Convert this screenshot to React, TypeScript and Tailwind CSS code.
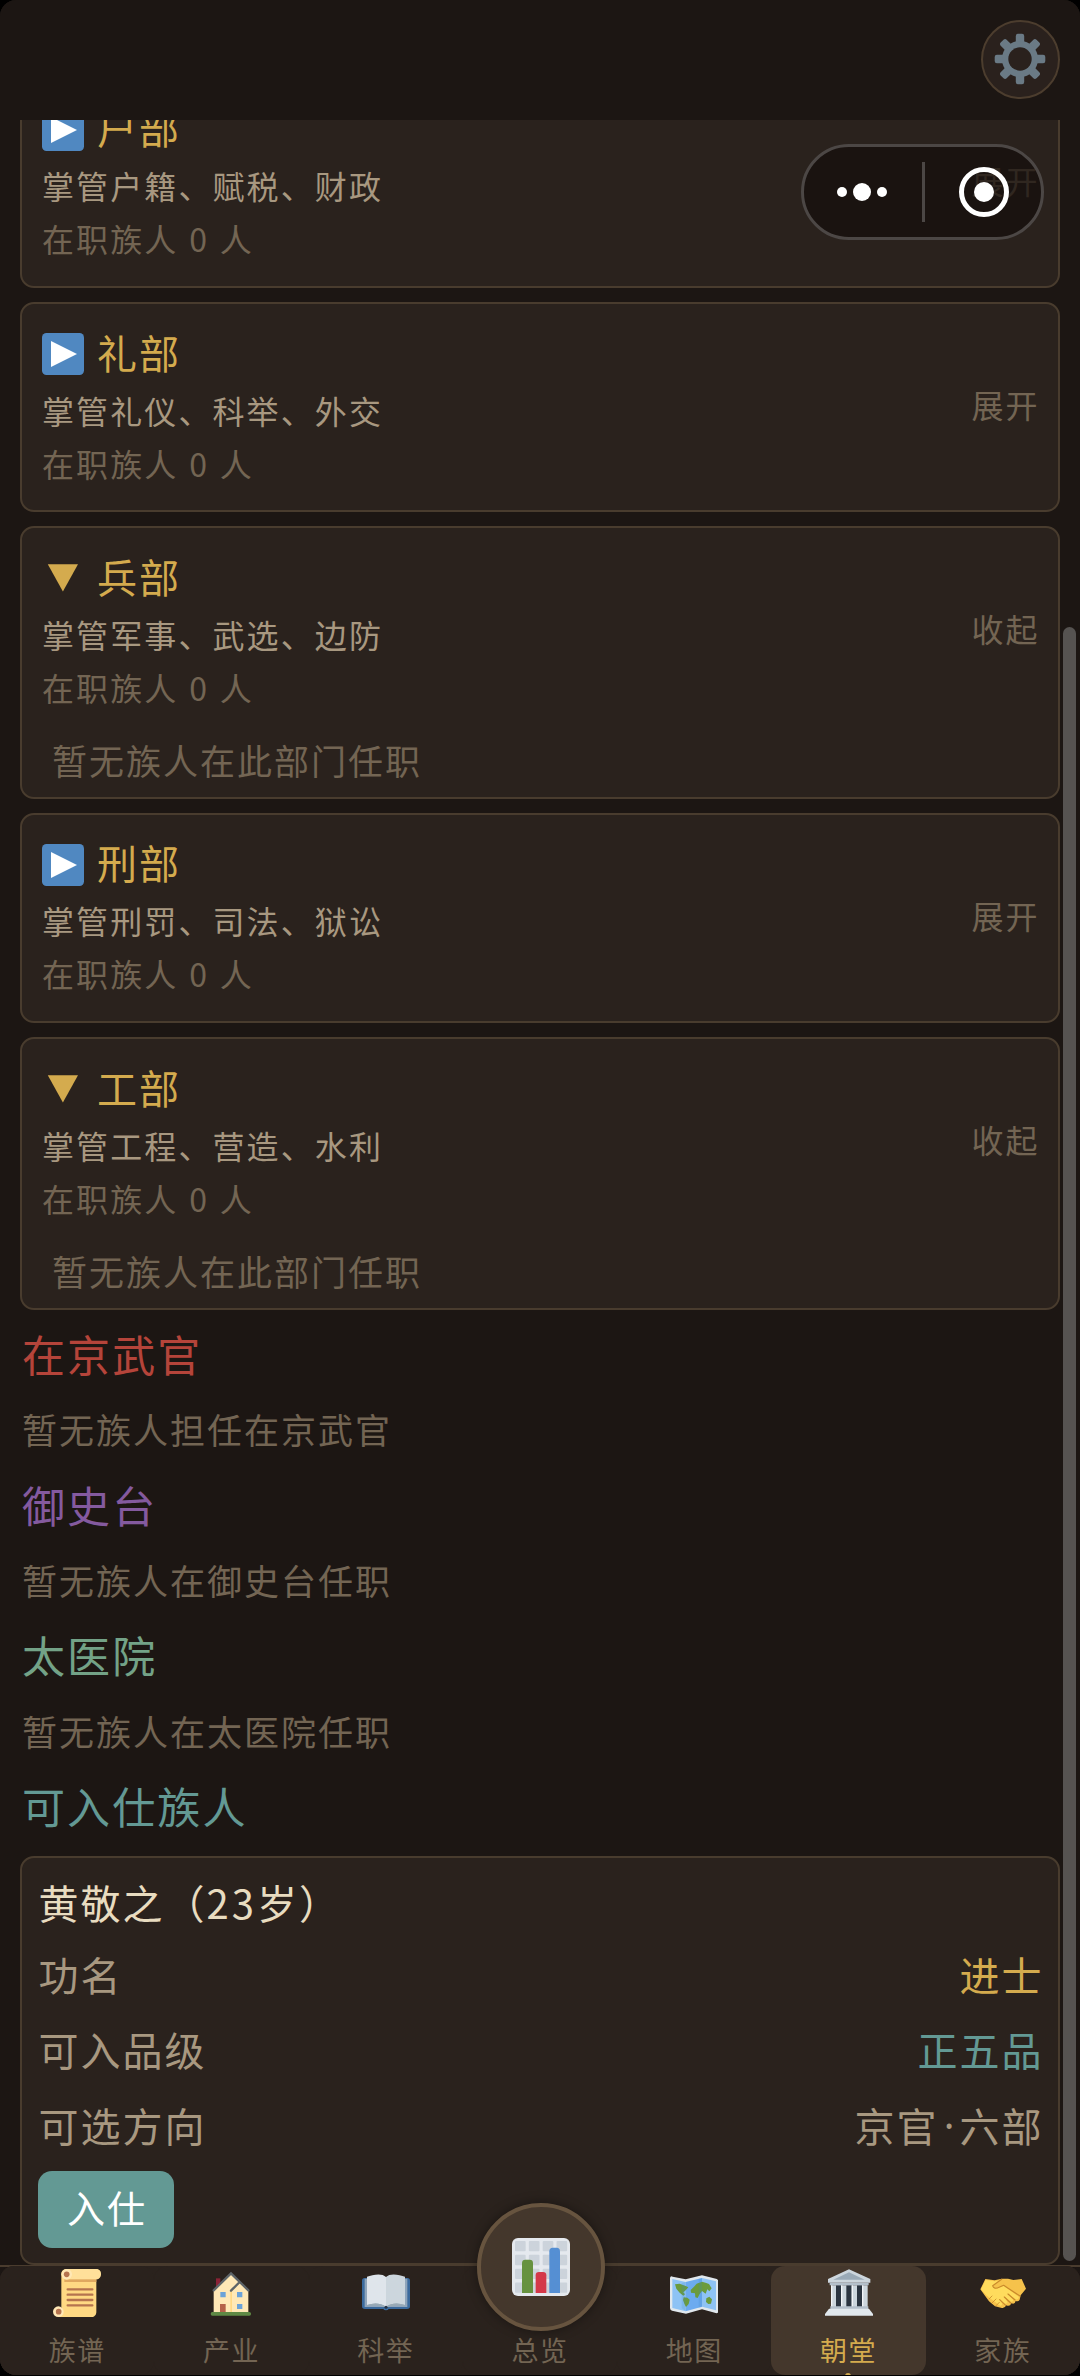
import type { ReactNode } from 'react'

type Department = {
  name: string
  duty: string
  open: boolean
}

const departments: Department[] = [
  { name: '户部', duty: '掌管户籍、赋税、财政', open: false },
  { name: '礼部', duty: '掌管礼仪、科举、外交', open: false },
  { name: '兵部', duty: '掌管军事、武选、边防', open: true },
  { name: '刑部', duty: '掌管刑罚、司法、狱讼', open: false },
  { name: '工部', duty: '掌管工程、营造、水利', open: true },
]

const offices = [
  { title: '在京武官', color: 'text-[#b5443a]', empty: '暂无族人担任在京武官' },
  { title: '御史台', color: 'text-[#845a9f]', empty: '暂无族人在御史台任职' },
  { title: '太医院', color: 'text-[#73a287]', empty: '暂无族人在太医院任职' },
]

const candidateRows = [
  { label: '功名', value: '进士', color: 'text-[#d4ab4e]' },
  { label: '可入品级', value: '正五品', color: 'text-[#639994]' },
]

function PlayIcon() {
  return (
    <svg width="42" height="42" viewBox="0 0 42 42">
      <rect width="42" height="42" rx="4.5" fill="#5088c1" />
      <path d="M9 8L35 21L9 34Z" fill="#fff" />
    </svg>
  )
}

function DownIcon() {
  return (
    <svg width="42" height="42" viewBox="0 0 42 42">
      <path d="M5.8 7.3H36L20.9 34.5Z" fill="#d4ab4e" />
    </svg>
  )
}

function GearIcon() {
  return (
    <svg width="52" height="52" viewBox="-26 -26 52 52">
      {[0, 45, 90, 135].map(angle => (
        <rect key={angle} x="-4.2" y="-25.3" width="8.4" height="50.6" rx="2.2" fill="#6a7a85" transform={`rotate(${angle})`} />
      ))}
      <circle r="18" fill="#6a7a85" />
      <circle r="11.7" fill="#2a211d" />
    </svg>
  )
}

function ScrollIcon() {
  return (
    <svg width="48" height="48" viewBox="158 233 144 144">
      <path fill="#ffd983" d="M183 248C183 239 190 233 199 233H288C297 233 302 240 302 248C302 257 296 264 288 264V362C288 371 282 377 274 377H172L183 350Z" />
      <path fill="#e0a85f" d="M192 264H288V272H192Z" />
      <path fill="#ffe8b6" d="M199 233H288C297 233 302 240 302 248S297 264 288 264H199Z" opacity="0.45" />
      <circle cx="199" cy="249" r="16" fill="#ffe8b6" />
      <circle cx="199" cy="249" r="8.5" fill="#b5744f" />
      <circle cx="174" cy="361" r="16" fill="#ffe8b6" />
      <circle cx="175" cy="361" r="8.5" fill="#b5744f" />
      <path stroke="#b5744f" strokeWidth="7" strokeLinecap="round" d="M202 294H276M202 310H276M202 326H276M202 342H276" />
    </svg>
  )
}

function HouseIcon() {
  return (
    <svg width="48" height="48" viewBox="621 233 144 144">
      <path fill="#8b2236" d="M648 261H661V292H648Z" />
      <path fill="#ffe8b6" d="M641 296L693 246L745 296V366H641Z" />
      <path fill="#ffd983" d="M691 298H696V366H691Z" />
      <path fill="none" stroke="#5d6468" strokeWidth="7" strokeLinecap="round" d="M641 297L693 246L745 297M693 298L716 275" />
      <path fill="#6ca3d8" d="M661 302H677V318H661ZM711 302H727V318H711ZM711 338H727V353H711Z" />
      <path fill="#b5624a" d="M660 338H677V364H660Z" />
      <rect x="632" y="362" width="121" height="11" rx="5" fill="#5f8a45" />
    </svg>
  )
}

function BookIcon() {
  return (
    <svg width="48" height="48" viewBox="1086 233 144 144">
      <path fill="#3b6a9d" d="M1086 268Q1086 260 1094 260H1222Q1230 260 1230 268V345Q1230 353 1221 353H1166Q1164 357 1158 357T1150 353H1095Q1086 353 1086 345Z" />
      <path fill="#8fa5bb" d="M1094 262H1222V347H1094Z" />
      <path fill="#dfe5eb" d="M1101 256C1118 250 1146 244 1158 257V346C1140 334 1120 335 1101 341Z" />
      <path fill="#ccd6dd" d="M1158 257C1170 244 1198 250 1215 256V341C1196 335 1176 334 1158 346Z" />
      <path fill="#99aab5" d="M1101 341C1120 335 1140 334 1158 346C1176 334 1196 335 1215 341L1215 344C1190 341 1176 343 1164 347H1152C1140 343 1126 341 1101 344Z" />
      <circle cx="1158" cy="348" r="4.5" fill="#243447" />
    </svg>
  )
}

function ChartIcon() {
  const cells = [0, 1, 2, 3]
  return (
    <svg width="58" height="58" viewBox="333 177 174 174">
      <rect x="333" y="177" width="174" height="174" rx="18" fill="#e5e9ee" />
      {cells.map(row =>
        cells.map(col => (
          <rect key={`${row}-${col}`} x={342 + col * 41.5} y={186 + row * 41.5} width="32" height="31" rx="3" fill="#ccd3db" />
        )),
      )}
      <path fill="#66923f" d="M363 252Q363 242 373 242H386Q396 242 396 252V342H363Z" />
      <path fill="#d43849" d="M404 289Q404 279 414 279H426Q436 279 436 289V342H404Z" />
      <path fill="#558fd3" d="M445 217Q445 206 455 206H467Q477 206 477 217V342H445Z" />
    </svg>
  )
}

function MapIcon() {
  return (
    <svg width="48" height="48" viewBox="90 233 144 144">
      <path fill="#e1e8ed" d="M90 260Q91 253 98 256L137 264L186 252L228 262Q235 264 235 271V360Q234 367 227 365L186 354L138 367L96 358Q90 356 90 350Z" />
      <path fill="#8ec3f5" d="M97 263L137 272V360L97 350Z" />
      <path fill="#6cabf0" d="M137 272L186 260V346L137 360Z" />
      <path fill="#8ec3f5" d="M186 260L228 270V357L186 346Z" />
      <path fill="#6b9b3d" d="M105 279L119 277L137 284L145 288L137 297L130 303L135 309L130 313L119 304L109 292ZM131 318L142 319L149 325L146 338L138 347L133 337L129 326ZM152 296L162 286L170 277L186 271L199 275L207 278L215 291L208 300L202 294L197 307L186 299L179 308L173 320L166 318L165 306L153 304ZM199 321L208 316L216 324L213 337L205 338L198 332Z" />
      <path fill="#3b88c3" opacity="0.2" d="M137 272V360L125 350V275ZM186 260V346L176 349V262Z" />
    </svg>
  )
}

function BankIcon() {
  return (
    <svg width="48" height="48" viewBox="549 233 144 144">
      <path fill="#ccd6dd" d="M567 282H677V350H567Z" />
      <path fill="#2b3541" d="M582 282H597V347H582ZM613 282H629V347H613ZM645 282H660V347H645Z" />
      <path fill="#f2f5f8" d="M567 282H571V347H567ZM597 282H601V347H597ZM629 282H633V347H629ZM660 282H664V347H660Z" />
      <path fill="#ccd6dd" d="M558 263L621 234L685 263V274H558Z" />
      <path fill="#9aaab7" d="M574 265L621 243L668 265Z" />
      <path fill="#b4c0cb" d="M563 274H680V282H563ZM565 345H679V353H565Z" />
      <path fill="#e1e8ed" d="M561 352H681L693 368V373H549V368Z" />
    </svg>
  )
}

function HandshakeIcon() {
  return (
    <svg width="48" height="48" viewBox="1018 238 144 144">
      <path fill="#f6c24b" d="M1022 299L1037 268L1065 272L1086 267L1105 267L1121 271L1146 268L1159 297L1143 317L1140 330Q1136 337 1128 334Q1126 345 1115 341Q1111 352 1100 347Q1094 358 1084 354L1066 350L1048 335L1036 318Z" />
      <path fill="#ffdc5d" d="M1024 299L1038 271L1066 275L1079 272L1060 290Q1064 302 1080 293L1092 288L1138 322Q1137 331 1128 329L1105 313L1121 331Q1119 338 1112 335L1093 320L1104 338Q1101 345 1094 341L1080 328L1088 343Q1085 351 1078 346L1040 317Z" />
      <path fill="none" stroke="#c98a2b" strokeWidth="3.5" strokeLinecap="round" strokeLinejoin="round" d="M1086 269L1059 288Q1062 301 1080 292L1092 287L1141 319M1105 313L1126 331M1094 322L1113 340M1080 330L1098 347" />
      <path fill="none" stroke="#c98a2b" strokeWidth="2.5" strokeLinecap="round" d="M1048 328L1057 319M1058 339L1069 328M1069 348L1079 338" />
    </svg>
  )
}

function DepartmentCard({ name, duty, open }: Department) {
  return (
    <div className="shrink-0 rounded-[14px] border-2 border-[#493c2e] bg-[#2a221d]">
      <div className="flex h-[206px] items-center justify-between pr-[18.5px] pl-[20px]">
        <div className="flex flex-col">
          <div className="flex h-[59px] items-center gap-[13px] text-[40px] tracking-[2px] text-[#d4ab4e]">
            {open ? <DownIcon /> : <PlayIcon />}
            <span className="pb-[5px]">{name}</span>
          </div>
          <div className="h-[53px] text-[32px] leading-[53px] tracking-[2.1px] text-[#a89880]">{duty}</div>
          <div className="h-[53px] text-[32px] leading-[53.5px] tracking-[2.1px] text-[#736553] [word-spacing:1.5px]">在职族人 0 人</div>
        </div>
        <span className="pb-[6px] text-[32px] tracking-[2px] text-[#736553]">{open ? '收起' : '展开'}</span>
      </div>
      {open && (
        <div className="h-[62.4px] pl-[30px] text-[35px] leading-[51px] tracking-[2px] text-[#736553]">暂无族人在此部门任职</div>
      )}
    </div>
  )
}

function Capsule() {
  return (
    <div className="absolute top-[144px] left-[801px] flex h-[96px] w-[243px] items-center rounded-full border-[3px] border-[#4c4745] bg-[#140d0c]/70">
      <div className="flex w-[118px] items-center justify-center gap-[6px] pr-[2px]">
        <i className="size-[10px] rounded-full bg-white" />
        <i className="size-[18px] rounded-full bg-white" />
        <i className="size-[10px] rounded-full bg-white" />
      </div>
      <div className="h-[60px] w-[3px] bg-[#4c4745]" />
      <div className="ml-[34px] flex size-[50px] items-center justify-center rounded-full border-[5px] border-white">
        <i className="size-[20px] rounded-full bg-white" />
      </div>
    </div>
  )
}

function NavItem({ icon, label, active }: { icon: ReactNode; label: string; active?: boolean }) {
  return (
    <div className={`flex flex-1 flex-col items-center rounded-[14px] pt-[3px] ${active ? 'bg-[#44372c] text-[#d4ab4e]' : 'bg-[#2a221d] text-[#736553]'}`}>
      <div className="h-[48px]">{icon}</div>
      <span className="mt-[13px] text-[27px] leading-[40px] tracking-[1.5px]">{label}</span>
    </div>
  )
}

export default function App() {
  return (
    <div className="h-[2376px] w-[1080px] overflow-hidden bg-black pb-px font-['Noto_Sans_CJK_SC',sans-serif]">
      <div className="relative flex h-[2375px] flex-col overflow-hidden rounded-[16px] bg-[#1c1613]">
        <header className="z-10 flex h-[120px] shrink-0 items-start justify-end bg-[#1c1613] pt-[20px] pr-[20px]">
          <button className="flex size-[79px] items-center justify-center rounded-full border-2 border-[#4c3d2e] bg-[#2a211d] pr-[2px] pb-[2px]">
            <GearIcon />
          </button>
        </header>

        <main className="h-[2145px] shrink-0 overflow-hidden px-[20px]">
          <div className="-mt-[42.3px] flex flex-col gap-[14.3px]">
            {departments.map(d => (
              <DepartmentCard key={d.name} {...d} />
            ))}
          </div>

          <div className="mt-[6.5px] pl-[2px]">
            {offices.map(o => (
              <div key={o.title}>
                <h2 className={`text-[43px] leading-[75.3px] tracking-[2.1px] ${o.color}`}>{o.title}</h2>
                <p className="text-[35px] leading-[75.3px] tracking-[2px] text-[#736553]">{o.empty}</p>
              </div>
            ))}
            <h2 className="text-[43px] leading-[75.3px] tracking-[2.1px] text-[#639994]">可入仕族人</h2>
          </div>

          <div className="mt-[13px] h-[409px] rounded-[14px] border-2 border-[#493c2e] bg-[#2a221d] pt-[9px] pr-[14.5px] pl-[16.5px] text-[40px] tracking-[2px]">
            <div className="h-[68.5px] leading-[70px] text-[#e8dcc0]">
              黄敬之（<span className="tracking-[3px]">23</span>岁）
            </div>
            {candidateRows.map(r => (
              <div key={r.label} className="flex h-[75.5px] items-center justify-between">
                <span className="text-[#a89880]">{r.label}</span>
                <span className={r.color}>{r.value}</span>
              </div>
            ))}
            <div className="flex h-[75.5px] items-center justify-between text-[#a89880]">
              <span>可选方向</span>
              <span className="flex items-center">
                <span>京官</span>
                <span className="w-[21px] text-center font-['Noto_Sans',sans-serif] leading-none tracking-normal">·</span>
                <span>六部</span>
              </span>
            </div>
            <button className="mt-[8.5px] -ml-[0.5px] h-[77px] w-[136px] rounded-[14px] bg-[#639994] pl-[2px] text-[38px] leading-[70px] text-white">
              <span className="relative -top-[2px]">入仕</span>
            </button>
          </div>
        </main>

        <nav className="h-[110px] border-t-2 border-[#4a3c2e] bg-[#1c1613]">
          <div className="-mt-[1px] flex h-[109px] rounded-[14px] bg-[#2a221d]">
            <NavItem icon={<ScrollIcon />} label="族谱" />
            <NavItem icon={<HouseIcon />} label="产业" />
            <NavItem icon={<BookIcon />} label="科举" />
            <NavItem icon={null} label="总览" />
            <NavItem icon={<MapIcon />} label="地图" />
            <NavItem icon={<BankIcon />} label="朝堂" active />
            <NavItem icon={<HandshakeIcon />} label="家族" />
          </div>
        </nav>

        {/* raised centre tab */}
        <div className="absolute top-[2203px] left-[477px] flex size-[128px] items-center justify-center rounded-full border-[4px] border-[#67543f] bg-[#44372c] shadow-[0_0_12px_rgba(0,0,0,0.4)]">
          <ChartIcon />
        </div>

        {/* marker under the active tab, mostly off screen */}
        <div className="absolute top-[2373px] left-[845px] h-[6px] w-[6px] rounded-full bg-[#d4ab4e]" />

        <div className="absolute top-[627px] left-[1063px] h-[1634px] w-[13px] rounded-full bg-[#565351]" />
        <Capsule />
      </div>
    </div>
  )
}
